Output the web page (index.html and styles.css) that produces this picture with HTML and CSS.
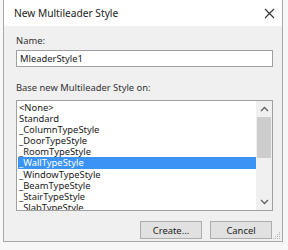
FILE: index.html
```html
<!DOCTYPE html>
<html lang="en">

<head>
	<meta charset="utf-8">
	<title>New Multileader Style</title>
	<link rel="stylesheet" href="styles.css">
</head>

<body>
	<div class="dialog">
		<div class="titlebar">
			<span class="title">New Multileader Style</span>
			<span class="close">
				<svg width="11" height="11" viewBox="0 0 11 11">
					<path d="M1 1L10 10M10 1L1 10" stroke="#333" stroke-width="1.1" fill="none" />
				</svg>
			</span>
		</div>
		<div class="body">
			<label class="label">Name:</label>
			<div class="textbox">MleaderStyle1</div>
			<label class="label label-base">Base new Multileader Style on:</label>
			<div class="listbox">
				<ul class="items">
					<li>&lt;None&gt;</li>
					<li>Standard</li>
					<li>_ColumnTypeStyle</li>
					<li>_DoorTypeStyle</li>
					<li>_RoomTypeStyle</li>
					<li class="selected">_WallTypeStyle</li>
					<li>_WindowTypeStyle</li>
					<li>_BeamTypeStyle</li>
					<li>_StairTypeStyle</li>
					<li>_SlabTypeStyle</li>
				</ul>
				<div class="scrollbar">
					<svg class="arrow" width="9" height="6" viewBox="0 0 9 6">
						<path d="M1 5L4.5 1.5L8 5" stroke="#606060" stroke-width="1.3" fill="none" />
					</svg>
					<div class="track">
						<div class="thumb"></div>
					</div>
					<svg class="arrow" width="9" height="6" viewBox="0 0 9 6">
						<path d="M1 1L4.5 4.5L8 1" stroke="#606060" stroke-width="1.3" fill="none" />
					</svg>
				</div>
			</div>
			<div class="buttons">
				<button class="btn">Create...</button>
				<button class="btn">Cancel</button>
			</div>
			<svg class="grip" width="8" height="8" viewBox="0 0 8 8">
				<rect x="6" y="0" width="1" height="1" fill="#b5b5b5" />
				<rect x="4" y="2" width="1" height="1" fill="#b5b5b5" />
				<rect x="6" y="2" width="1" height="1" fill="#b5b5b5" />
				<rect x="2" y="4" width="1" height="1" fill="#b5b5b5" />
				<rect x="4" y="4" width="1" height="1" fill="#b5b5b5" />
				<rect x="6" y="4" width="1" height="1" fill="#b5b5b5" />
				<rect x="0" y="6" width="1" height="1" fill="#b5b5b5" />
				<rect x="2" y="6" width="1" height="1" fill="#b5b5b5" />
				<rect x="4" y="6" width="1" height="1" fill="#b5b5b5" />
				<rect x="6" y="6" width="1" height="1" fill="#b5b5b5" />
			</svg>
		</div>
	</div>
</body>

</html>
```

FILE: styles.css
```css
body {
	margin: 0;
	background: #f7f7f7;
	font-family: "Noto Sans", "Open Sans", sans-serif;
	color: #1a1a1a;
}

.dialog {
	margin-left: 3px;
	width: 278px;
	height: 241px;
	border: 1px solid #a8a8a8;
	border-top: none;
	background: #f0f0f0;
	display: flex;
	flex-direction: column;
}

.titlebar {
	height: 26px;
	background: #fff;
	display: flex;
	align-items: center;
	justify-content: space-between;
	padding: 0 7px 0 10px;
}

.title {
	font-size: 10.2px;
	color: #222;
}

.close {
	display: flex;
}

.body {
	position: relative;
	flex: 1;
	padding: 8px 9px 0 12px;
	display: flex;
	flex-direction: column;
}

.label {
	font-size: 9.4px;
	color: #333;
	height: 14px;
	line-height: 14px;
}

.textbox {
	margin-top: 2px;
	height: 15px;
	border: 1px solid #a0a0a0;
	background: #fff;
	font-size: 9.4px;
	line-height: 15px;
	padding-left: 3px;
}

.label-base {
	margin-top: 14px;
}

.listbox {
	margin-top: 5px;
	height: 109px;
	border: 1px solid #a0a0a0;
	background: #fff;
	display: flex;
	overflow: hidden;
}

.items {
	list-style: none;
	margin: 0;
	padding: 1px 0 0 1px;
	flex: 1;
}

.items li {
	height: 11.1px;
	line-height: 11px;
	font-size: 9.4px;
	padding-left: 1px;
	white-space: nowrap;
}

.items li.selected {
	background: #3b93f5;
	color: #fff;
}

.scrollbar {
	width: 16px;
	background: #f0f0f0;
	display: flex;
	flex-direction: column;
	align-items: center;
}

.arrow {
	margin: 5px 0;
}

.track {
	flex: 1;
	width: 100%;
	padding: 0 1px;
	box-sizing: border-box;
}

.thumb {
	height: 41px;
	background: #cdcdcd;
}

.buttons {
	display: flex;
	justify-content: flex-end;
	gap: 8px;
	margin-top: 10px;
	margin-right: 1px;
}

.btn {
	width: 62px;
	height: 18px;
	border: 1px solid #adadad;
	background: #e1e1e1;
	font-family: inherit;
	font-size: 9.4px;
	color: #222;
	padding: 0;
}

.grip {
	position: absolute;
	right: 1px;
	bottom: 1px;
}
```
